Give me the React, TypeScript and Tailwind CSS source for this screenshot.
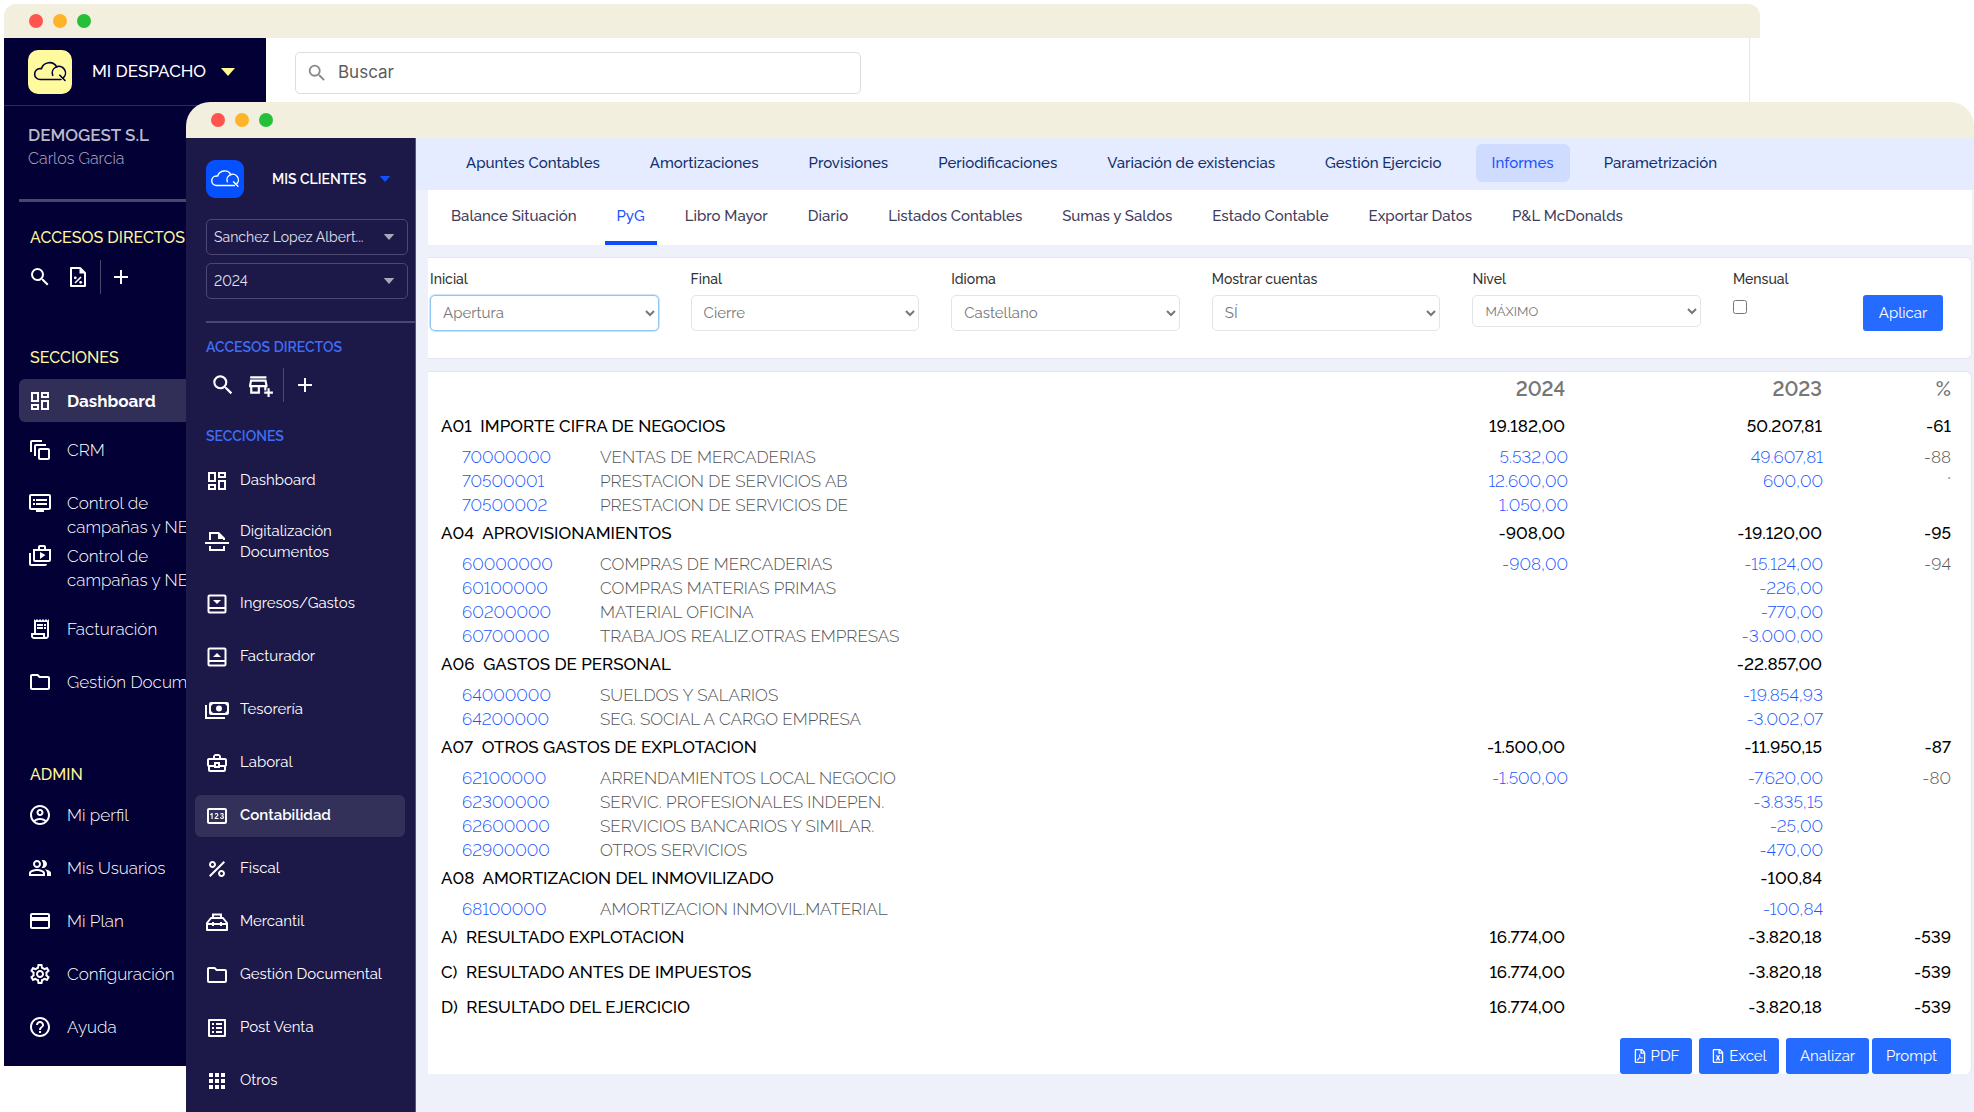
import { useState, type ReactNode } from "react";
import { FaRegFileExcel, FaRegFilePdf } from "react-icons/fa";
import {
    MdAdd,
    MdApps,
    MdHelpOutline,
    MdOutlineAccountCircle,
    MdOutlineAddBusiness,
    MdOutlineAutoAwesomeMotion,
    MdOutlineBusinessCenter,
    MdOutlineCreditCard,
    MdOutlineDashboard,
    MdOutlineDvr,
    MdOutlineFolder,
    MdOutlineListAlt,
    MdOutlinePeopleAlt,
    MdOutlinePin,
    MdOutlineReceiptLong,
    MdOutlineSettings,
    MdOutlineShopTwo,
    MdPercent,
    MdSearch,
} from "react-icons/md";

type MenuItem = {
    label: string;
    icon: ReactNode;
    active?: boolean;
    tall?: boolean;
};

type Row = {
    code: string;
    name: string;
    current?: string;
    previous?: string;
    percent?: string;
    group?: boolean;
};

// Iconos propios
function Icon({ children }: { children: ReactNode }) {
    return (
        <svg viewBox="0 0 24 24" className="size-6" fill="none" stroke="currentColor" strokeWidth="2" aria-hidden="true">
            {children}
        </svg>
    );
}

function CloudLogo({ className }: { className: string }) {
    return (
        <svg viewBox="0 0 44 44" className={className} fill="none" stroke="currentColor" strokeWidth="1.6" strokeLinecap="round" aria-hidden="true">
            <path d="M33 29.5H12.3a5.5 5.5 0 0 1-.3-11c.5 0 1 0 1.5.1a8.3 8.3 0 0 1 15.3-1.5" />
            <path d="M24.7 25.3a6.6 6.6 0 1 1 10.6 2.6" />
            <path d="M31.8 25.2l5.2 5.3" />
        </svg>
    );
}

function FilePercentIcon() {
    return (
        <Icon>
            <path d="M5 3h9l5 5v13H5z" strokeLinejoin="round" />
            <path d="M13.5 3v5.5H19z" fill="currentColor" stroke="none" />
            <path d="M9 18l6-6" strokeWidth="1.6" />
            <circle cx="9.3" cy="12.8" r="1.4" fill="currentColor" stroke="none" />
            <circle cx="14.7" cy="17.3" r="1.4" fill="currentColor" stroke="none" />
        </Icon>
    );
}

function ScanIcon() {
    return (
        <Icon>
            <path d="M5 10V3h8.5L19 8.5V10" />
            <path d="M13 2.5V9h6.5z" fill="currentColor" stroke="none" />
            <path d="M0 13h24" />
            <path d="M5 16v4h14v-4" />
        </Icon>
    );
}

function TrayIcon({ up }: { up?: boolean }) {
    return (
        <Icon>
            <rect x="3.5" y="3.5" width="17" height="17" rx="1" />
            <path d="M3 16h18" />
            <path d={up ? "M8 12h8l-4-4z" : "M8 8h8l-4 4z"} fill="currentColor" stroke="none" />
        </Icon>
    );
}

function CashIcon() {
    return (
        <Icon>
            <path d="M1 7v13h19" />
            <rect x="5" y="5" width="18" height="11" rx="1" />
            <circle cx="14" cy="10.5" r="3" fill="currentColor" stroke="none" />
            <path d="M5 5h4L5 9zM23 5v4l-4-4zM5 16v-4l4 4zM23 16h-4l4-4z" fill="currentColor" stroke="none" />
        </Icon>
    );
}

function ToolboxIcon() {
    return (
        <Icon>
            <path d="M8 8V4.5h8V8" />
            <path d="M2 20v-7l4-5h12l4 5v7z" strokeLinejoin="round" />
            <path d="M2 14h20M8 12v4M16 12v4" />
        </Icon>
    );
}

function Caret({ className }: { className: string }) {
    return (
        <svg viewBox="0 0 14 8" className={className} fill="currentColor" aria-hidden="true">
            <path d="M0 0h14L7 8z" />
        </svg>
    );
}

const officeMenu: MenuItem[] = [
    { label: "Dashboard", icon: <MdOutlineDashboard size={24} />, active: true },
    { label: "CRM", icon: <MdOutlineAutoAwesomeMotion size={24} /> },
    { label: "Control de\ncampañas y NEWS", icon: <MdOutlineDvr size={24} />, tall: true },
    { label: "Control de\ncampañas y NEWS", icon: <MdOutlineShopTwo size={24} />, tall: true },
    { label: "Facturación", icon: <MdOutlineReceiptLong size={24} /> },
    { label: "Gestión Documental", icon: <MdOutlineFolder size={24} /> },
];

const adminMenu: MenuItem[] = [
    { label: "Mi perfil", icon: <MdOutlineAccountCircle size={24} /> },
    { label: "Mis Usuarios", icon: <MdOutlinePeopleAlt size={24} /> },
    { label: "Mi Plan", icon: <MdOutlineCreditCard size={24} /> },
    { label: "Configuración", icon: <MdOutlineSettings size={24} /> },
    { label: "Ayuda", icon: <MdHelpOutline size={24} /> },
];

const clientMenu: MenuItem[] = [
    { label: "Dashboard", icon: <MdOutlineDashboard size={24} /> },
    { label: "Digitalización Documentos", icon: <ScanIcon />, tall: true },
    { label: "Ingresos/Gastos", icon: <TrayIcon /> },
    { label: "Facturador", icon: <TrayIcon up /> },
    { label: "Tesorería", icon: <CashIcon /> },
    { label: "Laboral", icon: <MdOutlineBusinessCenter size={24} /> },
    { label: "Contabilidad", icon: <MdOutlinePin size={24} />, active: true },
    { label: "Fiscal", icon: <MdPercent size={24} /> },
    { label: "Mercantil", icon: <ToolboxIcon /> },
    { label: "Gestión Documental", icon: <MdOutlineFolder size={24} /> },
    { label: "Post Venta", icon: <MdOutlineListAlt size={24} /> },
    { label: "Otros", icon: <MdApps size={24} /> },
];

const sections = [
    "Apuntes Contables",
    "Amortizaciones",
    "Provisiones",
    "Periodificaciones",
    "Variación de existencias",
    "Gestión Ejercicio",
    "Informes",
    "Parametrización",
];

const reports = [
    "Balance Situación",
    "PyG",
    "Libro Mayor",
    "Diario",
    "Listados Contables",
    "Sumas y Saldos",
    "Estado Contable",
    "Exportar Datos",
    "P&L McDonalds",
];

const rows: Row[] = [
    { code: "A01", name: "IMPORTE CIFRA DE NEGOCIOS", current: "19.182,00", previous: "50.207,81", percent: "-61", group: true },
    { code: "70000000", name: "VENTAS DE MERCADERIAS", current: "5.532,00", previous: "49.607,81", percent: "-88" },
    { code: "70500001", name: "PRESTACION DE SERVICIOS AB", current: "12.600,00", previous: "600,00", percent: "*" },
    { code: "70500002", name: "PRESTACION DE SERVICIOS DE", current: "1.050,00" },
    { code: "A04", name: "APROVISIONAMIENTOS", current: "-908,00", previous: "-19.120,00", percent: "-95", group: true },
    { code: "60000000", name: "COMPRAS DE MERCADERIAS", current: "-908,00", previous: "-15.124,00", percent: "-94" },
    { code: "60100000", name: "COMPRAS MATERIAS PRIMAS", previous: "-226,00" },
    { code: "60200000", name: "MATERIAL OFICINA", previous: "-770,00" },
    { code: "60700000", name: "TRABAJOS REALIZ.OTRAS EMPRESAS", previous: "-3.000,00" },
    { code: "A06", name: "GASTOS DE PERSONAL", previous: "-22.857,00", group: true },
    { code: "64000000", name: "SUELDOS Y SALARIOS", previous: "-19.854,93" },
    { code: "64200000", name: "SEG. SOCIAL A CARGO EMPRESA", previous: "-3.002,07" },
    { code: "A07", name: "OTROS GASTOS DE EXPLOTACION", current: "-1.500,00", previous: "-11.950,15", percent: "-87", group: true },
    { code: "62100000", name: "ARRENDAMIENTOS LOCAL NEGOCIO", current: "-1.500,00", previous: "-7.620,00", percent: "-80" },
    { code: "62300000", name: "SERVIC. PROFESIONALES INDEPEN.", previous: "-3.835,15" },
    { code: "62600000", name: "SERVICIOS BANCARIOS Y SIMILAR.", previous: "-25,00" },
    { code: "62900000", name: "OTROS SERVICIOS", previous: "-470,00" },
    { code: "A08", name: "AMORTIZACION DEL INMOVILIZADO", previous: "-100,84", group: true },
    { code: "68100000", name: "AMORTIZACION INMOVIL.MATERIAL", previous: "-100,84" },
    { code: "A)", name: "RESULTADO EXPLOTACION", current: "16.774,00", previous: "-3.820,18", percent: "-539", group: true },
    { code: "C)", name: "RESULTADO ANTES DE IMPUESTOS", current: "16.774,00", previous: "-3.820,18", percent: "-539", group: true },
    { code: "D)", name: "RESULTADO DEL EJERCICIO", current: "16.774,00", previous: "-3.820,18", percent: "-539", group: true },
];

function TitleBar({ className }: { className: string }) {
    return (
        <div className={`flex shrink-0 items-center gap-[10px] bg-[#f3efde] pl-[25px] ${className}`}>
            <span className="size-[14px] rounded-full bg-[#ff544d]" />
            <span className="size-[14px] rounded-full bg-[#feb429]" />
            <span className="size-[14px] rounded-full bg-[#24c138]" />
        </div>
    );
}

function OfficeItem({ item }: { item: MenuItem }) {
    return (
        <a
            href="#"
            className={`flex pl-[9px] text-[17px] ${item.tall ? "h-[53px] items-start" : "h-[43px] items-center"} ${
                item.active ? "rounded-md bg-[#312f57] font-bold" : "font-light"
            }`}
        >
            <span className="shrink-0">{item.icon}</span>
            <span className="ml-[15px] leading-6 whitespace-pre">{item.label}</span>
        </a>
    );
}

function OfficeWindow() {
    return (
        <div className="absolute top-1 right-[214px] left-1">
            <TitleBar className="h-[34px] rounded-t-xl" />
            <div className="mr-[10px] flex border-r border-[#dbe5ff] bg-white">
                <aside className="w-[262px] shrink-0 bg-[#030035] pb-[18px] text-white">
                    <div className="flex h-[68px] items-center border-b border-[#2f2d56] pl-6">
                        <span className="rounded-[10px] bg-[#fffa9e] text-[#030035]">
                            <CloudLogo className="size-11" />
                        </span>
                        <button type="button" className="ml-5 flex items-center gap-[15px] text-[17px] font-medium">
                            MI DESPACHO
                            <Caret className="h-2 w-[14px] text-[#fff98f]" />
                        </button>
                    </div>
                    <div className="px-6 pt-[17px]">
                        <p className="text-[17px] leading-6 font-semibold text-[#bbbac9]">DEMOGEST S.L</p>
                        <p className="text-base leading-6 font-light text-[#b3b2c5]">Carlos Garcia</p>
                    </div>
                    <div className="mt-7 ml-[15px] h-[3px] bg-[#4a4869]" />
                    <h2 className="mt-6 pl-[26px] text-base leading-6 font-medium text-[#fff799]">ACCESOS DIRECTOS</h2>
                    <div className="mt-[10px] flex h-[34px] items-center pl-6">
                        <button type="button" aria-label="Buscar"><MdSearch size={24} /></button>
                        <button type="button" aria-label="Impuestos" className="ml-[14px]"><FilePercentIcon /></button>
                        <span className="ml-[10px] h-full w-px bg-[#4a4869]" />
                        <button type="button" aria-label="Añadir" className="ml-2"><MdAdd size={24} /></button>
                    </div>
                    <h2 className="mt-[52px] pl-[26px] text-base leading-6 font-medium text-[#fff799]">SECCIONES</h2>
                    <nav className="mt-[9px] ml-[15px] flex flex-col">
                        <OfficeItem item={officeMenu[0]} />
                        <div className="mt-[6px] mb-[20px]"><OfficeItem item={officeMenu[1]} /></div>
                        <OfficeItem item={officeMenu[2]} />
                        <OfficeItem item={officeMenu[3]} />
                        <div className="mt-[10px] flex flex-col gap-[10px]">
                            <OfficeItem item={officeMenu[4]} />
                            <OfficeItem item={officeMenu[5]} />
                        </div>
                    </nav>
                    <h2 className="mt-[60px] pl-[26px] text-base leading-6 font-medium text-[#fff799]">ADMIN</h2>
                    <nav className="mt-[6px] ml-[15px] flex flex-col gap-[10px]">
                        {adminMenu.map((item) => (
                            <OfficeItem key={item.label} item={item} />
                        ))}
                    </nav>
                </aside>
                <div className="min-w-0 flex-1 pt-[14px] pl-[29px]">
                    <label className="flex h-[42px] max-w-[566px] items-center gap-[10px] rounded-[5px] border border-[#dddddd] pl-[10px]">
                        <MdSearch size={22} className="text-[#8a8a8a]" />
                        <input
                            type="text"
                            aria-label="Buscar"
                            placeholder="Buscar"
                            className="min-w-0 flex-1 font-[Inter,sans-serif] text-[17px] outline-none placeholder:text-[#5c5c5c]"
                        />
                    </label>
                </div>
            </div>
        </div>
    );
}

function SideSelect({ label, options }: { label: string; options: string[] }) {
    return (
        <div className="relative">
            <select
                aria-label={label}
                className="h-9 w-full appearance-none rounded-[5px] border border-[#4a4770] bg-transparent pr-8 pl-[7px] text-sm text-[#e2e1ea]"
            >
                {options.map((option) => (
                    <option key={option}>{option}</option>
                ))}
            </select>
            <Caret className="pointer-events-none absolute top-[15px] right-[13px] h-[6px] w-3 text-[#a9a8bb]" />
        </div>
    );
}

function ClientSidebar() {
    return (
        <aside className="w-[230px] shrink-0 border-r border-[#56547a] bg-[#1c1848] text-white">
            <div className="flex items-center pt-[22px] pl-5">
                <span className="rounded-[9px] bg-[#0550ff]">
                    <CloudLogo className="size-[38px]" />
                </span>
                <button type="button" className="ml-7 flex items-center gap-[13px] text-sm font-semibold">
                    MIS CLIENTES
                    <Caret className="h-[6px] w-3 text-[#0f52ff]" />
                </button>
            </div>
            <div className="mt-[21px] flex flex-col gap-2 pr-[7px] pl-5">
                <SideSelect label="Cliente" options={["Sanchez Lopez Albert..."]} />
                <SideSelect label="Ejercicio" options={["2024", "2023"]} />
            </div>
            <div className="mt-[22px] ml-5 h-[2px] bg-[#4a4770]" />
            <h2 className="mt-[14px] pl-5 text-sm leading-5 font-semibold text-[#3f6df5]">ACCESOS DIRECTOS</h2>
            <div className="mt-[11px] flex h-[34px] items-center pl-6">
                <button type="button" aria-label="Buscar"><MdSearch size={26} /></button>
                <button type="button" aria-label="Añadir empresa" className="ml-3"><MdOutlineAddBusiness size={26} /></button>
                <span className="ml-[9px] h-full w-px bg-[#4a4770]" />
                <button type="button" aria-label="Añadir" className="ml-[9px]"><MdAdd size={24} /></button>
            </div>
            <h2 className="mt-6 pl-5 text-sm leading-5 font-semibold text-[#3f6df5]">SECCIONES</h2>
            <nav className="mt-2 flex flex-col pr-[10px] pl-[9px]">
                {clientMenu.map((item) => (
                    <div key={item.label} className={`flex items-center ${item.tall ? "h-[70px]" : "h-[53px]"}`}>
                        <a
                            href="#"
                            className={`flex h-[42px] flex-1 items-center gap-[11px] rounded-md pl-[10px] text-[15px] ${
                                item.active ? "bg-[#33305a] font-semibold" : "font-normal"
                            }`}
                        >
                            <span className="shrink-0">{item.icon}</span>
                            <span className="leading-[21px]">{item.label}</span>
                        </a>
                    </div>
                ))}
            </nav>
        </aside>
    );
}

function FilterSelect({ label, value, small }: { label: string; value: string; small?: boolean }) {
    const focused = label === "Inicial";

    return (
        <label className="flex min-w-0 flex-1 flex-col text-sm leading-5 font-medium text-[#333333]">
            {label}
            <select
                className={`mt-[6px] rounded-[5px] border bg-white pl-2 font-normal text-[#777777] ${
                    small ? "h-8 text-[13px]" : "h-9 text-[15px]"
                } ${focused ? "border-[#8ec5f2] ring-1 ring-[#cfe6fa]" : "border-[#e2e4e8]"}`}
            >
                <option>{value}</option>
            </select>
        </label>
    );
}

function Filters() {
    const [monthly, setMonthly] = useState(false);

    return (
        <form
            onSubmit={(e) => e.preventDefault()}
            className="mt-3 mr-[2px] ml-3 flex h-[102px] items-start gap-8 rounded-r-md border border-l-0 border-[#e3e6ef] bg-white pt-[11px] pr-7 pl-[2px]"
        >
            <FilterSelect label="Inicial" value="Apertura" />
            <FilterSelect label="Final" value="Cierre" />
            <FilterSelect label="Idioma" value="Castellano" />
            <FilterSelect label="Mostrar cuentas" value="SÍ" />
            <FilterSelect label="Nivel" value="MÁXIMO" small />
            <div className="flex w-[210px] items-start justify-between">
                <label className="flex flex-col items-start text-sm leading-5 font-medium text-[#333333]">
                    Mensual
                    <input
                        type="checkbox"
                        checked={monthly}
                        onChange={(e) => setMonthly(e.target.checked)}
                        className="mt-[11px] size-[14px]"
                    />
                </label>
                <button type="submit" className="mt-[26px] h-9 w-20 rounded-[3px] bg-[#266bff] text-[15px] text-white">
                    Aplicar
                </button>
            </div>
        </form>
    );
}

function ReportRow({ row }: { row: Row }) {
    if (row.group) {
        return (
            <tr className="h-[35px] font-medium text-black">
                <th scope="row" colSpan={2} className="pb-[3px] pl-[13px] text-left font-medium whitespace-pre">
                    {row.code}{"  "}{row.name}
                </th>
                <td className="pr-[3px] pb-[3px] text-right">{row.current}</td>
                <td className="pr-[2px] pb-[3px] text-right">{row.previous}</td>
                <td className="pr-5 pb-[3px] text-right">{row.percent}</td>
            </tr>
        );
    }

    return (
        <tr className="h-6 font-light text-[#555555]">
            <td className="pl-[34px] text-[#1a55ff]">
                <a href="#">{row.code}</a>
            </td>
            <td>{row.name}</td>
            <td className="text-right text-[#1a55ff]">{row.current}</td>
            <td className="pr-px text-right text-[#1a55ff]">{row.previous}</td>
            <td className={`pr-5 text-right ${row.percent === "*" ? "align-top text-xs leading-6" : ""}`}>{row.percent}</td>
        </tr>
    );
}

function Report() {
    const button = "flex h-9 items-center justify-center gap-1 rounded-[3px] bg-[#266bff] text-[15px] text-white";

    return (
        <section className="mt-3 mr-[2px] ml-3 rounded-r-md border border-b-0 border-l-0 border-[#e3e6ef] bg-white">
            <table className="w-full table-fixed border-collapse text-[17px] leading-6">
                <colgroup>
                    <col className="w-[172px]" />
                    <col />
                    <col className="w-[200px]" />
                    <col className="w-[256px]" />
                    <col className="w-[147px]" />
                </colgroup>
                <thead>
                    <tr className="h-[38px] text-xl text-[#777777]">
                        <th scope="col" colSpan={2} aria-label="Cuenta" />
                        <th scope="col" className="pr-[3px] pb-1 text-right font-semibold">2024</th>
                        <th scope="col" className="pr-[2px] pb-1 text-right font-semibold">2023</th>
                        <th scope="col" className="pr-5 pb-1 text-right font-semibold">%</th>
                    </tr>
                </thead>
                <tbody>
                    {rows.map((row) => (
                        <ReportRow key={row.code} row={row} />
                    ))}
                </tbody>
            </table>
            <div className="mt-3 flex justify-end pr-5">
                <button type="button" className={`${button} w-[72px]`}>
                    <FaRegFilePdf size={14} />
                    PDF
                </button>
                <button type="button" className={`${button} ml-[7px] w-20`}>
                    <FaRegFileExcel size={14} />
                    Excel
                </button>
                <button type="button" className={`${button} ml-[7px] w-[83px]`}>Analizar</button>
                <button type="button" className={`${button} ml-[3px] w-[79px]`}>Prompt</button>
            </div>
        </section>
    );
}

function ClientWindow() {
    return (
        <div className="absolute top-[102px] right-0 bottom-0 left-[186px] flex flex-col">
            <TitleBar className="h-9 rounded-t-[24px]" />
            <div className="flex min-h-0 flex-1">
                <ClientSidebar />
                <main className="min-w-0 flex-1 bg-[#eef1fa]">
                    <nav className="flex h-[52px] items-start gap-[18px] bg-[#e5ecff] pt-[6px] pl-[34px]">
                        {sections.map((name) => (
                            <a
                                key={name}
                                href="#"
                                className={`flex h-[38px] items-center rounded-md px-4 text-[15px] font-medium whitespace-nowrap ${
                                    name === "Informes" ? "bg-[#cfdcff] text-[#1a55ff]" : "text-[#12306f]"
                                }`}
                            >
                                {name}
                            </a>
                        ))}
                    </nav>
                    <nav className="mr-[2px] ml-3 flex h-[55px] gap-4 bg-white pl-[11px]">
                        {reports.map((name) => (
                            <a
                                key={name}
                                href="#"
                                className={`flex items-center border-b-4 px-3 pt-[2px] text-[15px] font-medium whitespace-nowrap ${
                                    name === "PyG" ? "border-[#0d4bff] text-[#1a55ff]" : "border-transparent text-[#3f3d5c]"
                                }`}
                            >
                                {name}
                            </a>
                        ))}
                    </nav>
                    <Filters />
                    <Report />
                </main>
            </div>
        </div>
    );
}

export default function App() {
    return (
        <div className="relative h-screen overflow-hidden bg-white font-[Raleway,Lato,sans-serif] lining-nums">
            <OfficeWindow />
            <ClientWindow />
        </div>
    );
}
